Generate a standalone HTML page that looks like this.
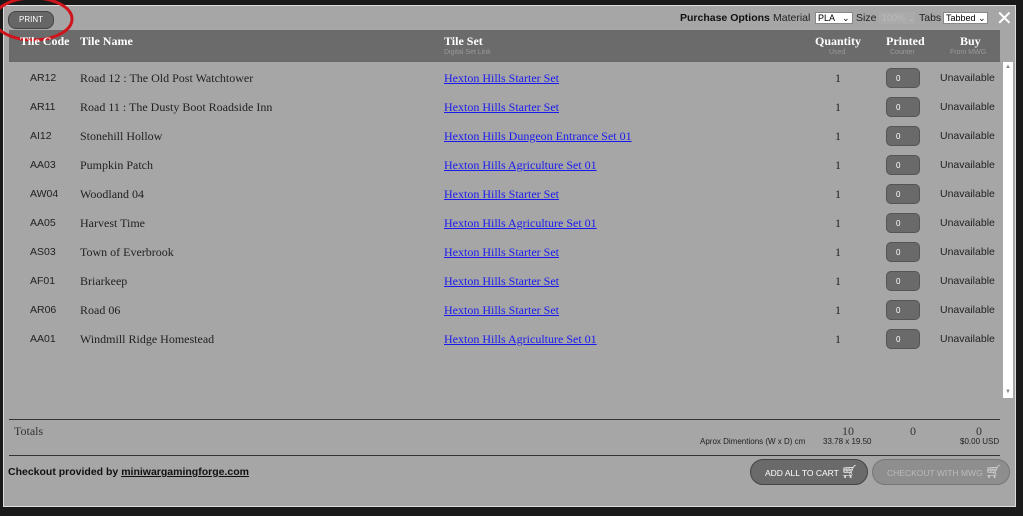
<!DOCTYPE html>
<html><head><style>
body{margin:0;width:1023px;height:516px;background:#1a1a1a;position:relative;overflow:hidden;font-family:"Liberation Sans",sans-serif}
.p{position:absolute;left:3px;top:5px;width:1013px;height:502px;background:#a6a6a6;border:1px solid #ddd;box-sizing:border-box}
.a{position:absolute;white-space:nowrap}
.serif{font-family:"Liberation Serif",serif}
.hdr{position:absolute;left:9px;top:30px;width:991px;height:32px;background:#6b6b6b}
.h{color:#fff;font-family:"Liberation Serif",serif;font-weight:bold;font-size:12px}
.sub{color:#999;font-size:7px}
.row{font-size:10.5px;color:#222}
.srow{font-size:12px;color:#222;font-family:"Liberation Serif",serif}
.lnk{color:#1a1aee;text-decoration:underline;font-family:"Liberation Serif",serif;font-size:12px}
.cnt{position:absolute;left:886px;width:34px;height:20px;background:#6a6a6a;border:1px solid #555;border-radius:5px;color:#fff;font-size:8px;box-sizing:border-box;padding:5px 0 0 9px}
.sel{position:absolute;background:#fff;border:1px solid #888;font-size:9px;height:12px;top:12px;box-sizing:border-box;padding:0 2px;line-height:10px;white-space:nowrap;overflow:hidden}
</style></head><body>
<div class="p"></div>
<div class="hdr"></div>
<div class="a" style="left:8px;top:11px;width:44px;height:16px;background:#666;border-radius:8px;border:1px solid #444;color:#fff;font-size:8px;text-align:center;line-height:16px">PRINT</div>
<svg class="a" style="left:0;top:0" width="80" height="45"><ellipse cx="33" cy="19" rx="39" ry="21" fill="none" stroke="#d0141c" stroke-width="3"/></svg>
<div class="a" style="left:680px;top:12px;font-size:10.5px;font-weight:bold;color:#111">Purchase Options</div>
<div class="a" style="left:773px;top:12px;font-size:10.5px;color:#222">Material</div>
<div class="sel" style="left:815px;width:38px">PLA &nbsp;&nbsp;⌄</div>
<div class="a" style="left:856px;top:12px;font-size:10.5px;color:#222">Size</div>
<div class="sel" style="left:879px;width:36px;color:#bbb;background:#aaa;border-color:#aaa">100% ⌄</div>
<div class="a" style="left:919px;top:12px;font-size:10.5px;color:#222">Tabs</div>
<div class="sel" style="left:943px;width:45px">Tabbed ⌄</div>
<div class="a" style="left:996px;top:6px;font-size:20px;color:#fff">✕</div>
<div class="a h" style="left:20px;top:34px">Tile Code</div>
<div class="a h" style="left:80px;top:34px">Tile Name</div>
<div class="a h" style="left:444px;top:34px">Tile Set</div>
<div class="a sub" style="left:444px;top:49px">Digital Set Link</div>
<div class="a h" style="left:815px;top:34px">Quantity</div>
<div class="a sub" style="left:829px;top:49px">Used</div>
<div class="a h" style="left:886px;top:34px">Printed</div>
<div class="a sub" style="left:890px;top:49px">Counter</div>
<div class="a h" style="left:960px;top:34px">Buy</div>
<div class="a sub" style="left:950px;top:49px">From MWG</div>
<div class="a" style="left:1003px;top:62px;width:10px;height:336px;background:#fff"></div>
<div class="a" style="left:1005px;top:64px;font-size:6px;color:#888">▲</div>
<div class="a" style="left:1005px;top:389px;font-size:6px;color:#888">▼</div>
<div id="rows"></div>
<script>
var d=[["AR12","Road 12 : The Old Post Watchtower","Hexton Hills Starter Set"],["AR11","Road 11 : The Dusty Boot Roadside Inn","Hexton Hills Starter Set"],["AI12","Stonehill Hollow","Hexton Hills Dungeon Entrance Set 01"],["AA03","Pumpkin Patch","Hexton Hills Agriculture Set 01"],["AW04","Woodland 04","Hexton Hills Starter Set"],["AA05","Harvest Time","Hexton Hills Agriculture Set 01"],["AS03","Town of Everbrook","Hexton Hills Starter Set"],["AF01","Briarkeep","Hexton Hills Starter Set"],["AR06","Road 06","Hexton Hills Starter Set"],["AA01","Windmill Ridge Homestead","Hexton Hills Agriculture Set 01"]];
var h="";d.forEach(function(r,i){var y=71+i*29;
h+='<div class="a row" style="left:30px;top:'+(y+1)+'px">'+r[0]+'</div><div class="a srow" style="left:80px;top:'+y+'px">'+r[1]+'</div><div class="a lnk" style="left:444px;top:'+y+'px">'+r[2]+'</div><div class="a srow" style="left:835px;top:'+y+'px">1</div><div class="cnt" style="top:'+(y-3)+'px">0</div><div class="a row" style="left:940px;top:'+(y+1)+'px">Unavailable</div>';});
document.getElementById("rows").innerHTML=h;
</script>
<div class="a" style="left:9px;top:419px;width:991px;height:1px;background:#333"></div>
<div class="a serif" style="left:14px;top:424px;font-size:12px;color:#333">Totals</div>
<div class="a serif" style="left:842px;top:424px;font-size:12px;color:#333">10</div>
<div class="a serif" style="left:910px;top:424px;font-size:12px;color:#333">0</div>
<div class="a serif" style="left:976px;top:424px;font-size:12px;color:#333">0</div>
<div class="a" style="left:700px;top:437px;font-size:8px;color:#222">Aprox Dimentions (W x D) cm</div>
<div class="a" style="left:823px;top:437px;font-size:8px;color:#222">33.78 x 19.50</div>
<div class="a" style="left:960px;top:437px;font-size:8px;color:#222">$0.00 USD</div>
<div class="a" style="left:9px;top:455px;width:991px;height:1px;background:#333"></div>
<div class="a" style="left:8px;top:466px;font-size:10.5px;font-weight:bold;color:#111">Checkout provided by <u>miniwargamingforge.com</u></div>
<div class="a" style="left:750px;top:459px;width:118px;height:26px;background:#6a6a6a;border:1px solid #444;border-radius:13px;box-sizing:border-box;color:#fff;font-size:8.5px;line-height:24px;padding-left:14px">ADD ALL TO CART <span style="font-size:13px">🛒︎</span></div>
<div class="a" style="left:872px;top:459px;width:138px;height:26px;background:#8e8e8e;border:1px solid #777;border-radius:13px;box-sizing:border-box;color:#bbb;font-size:8.5px;line-height:24px;padding-left:14px">CHECKOUT WITH MWG <span style="font-size:13px;color:#ddd">🛒︎</span></div>
</body></html>
